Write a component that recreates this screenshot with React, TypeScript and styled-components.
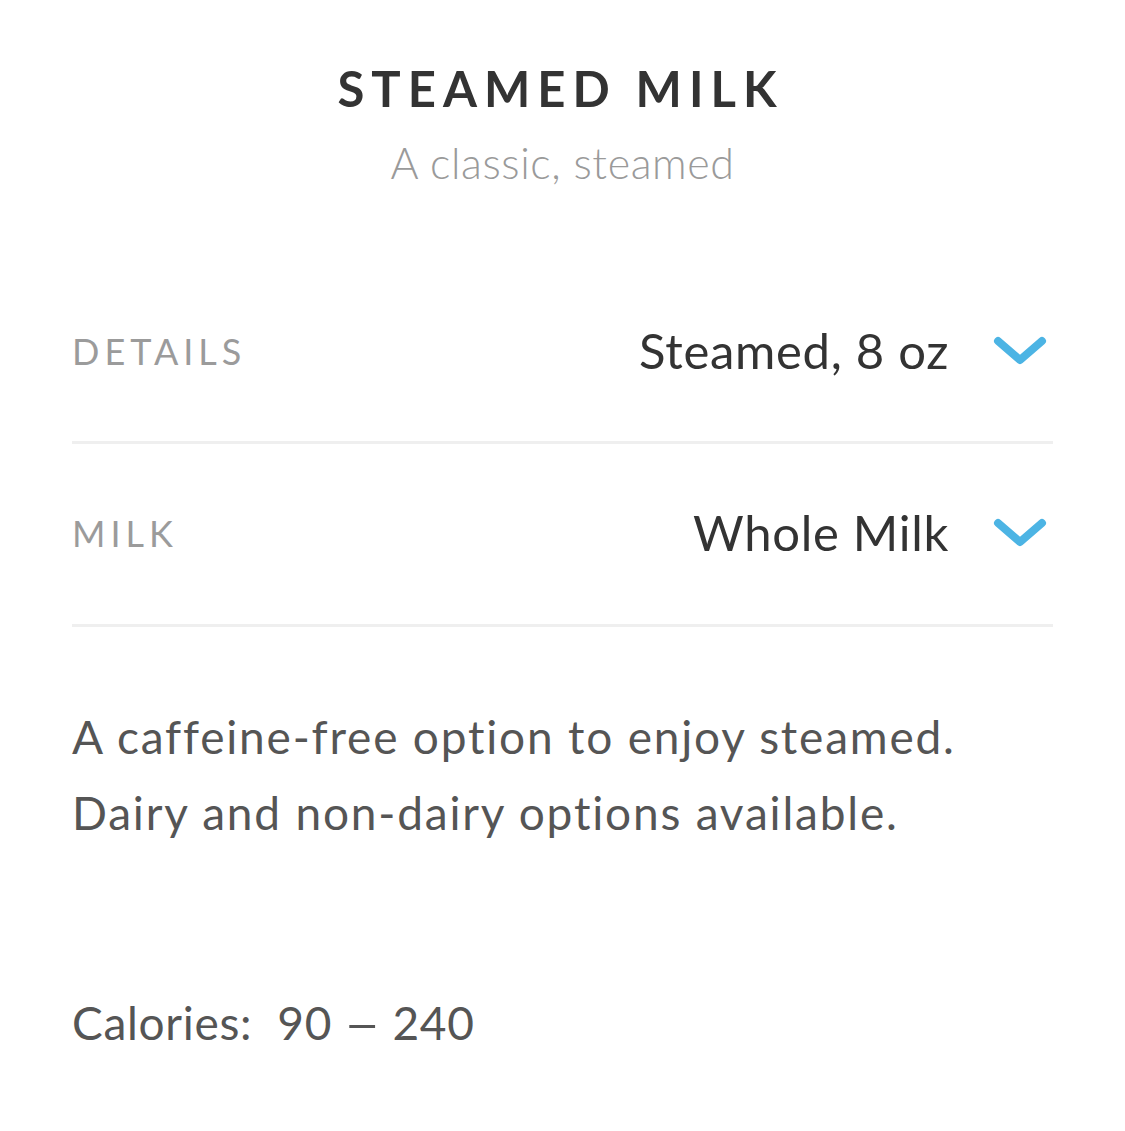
import React from "react";
import styled, { createGlobalStyle } from "styled-components";

const Global = createGlobalStyle`
  html, body { margin: 0; padding: 0; background: #ffffff; }
  body { font-family: Lato, "Noto Sans", sans-serif; -webkit-font-smoothing: antialiased; }
`;

const Page = styled.main`
  width: 1125px;
  min-height: 1131px;
  box-sizing: border-box;
  padding: 0 72px;
  display: flex;
  flex-direction: column;
`;

const Header = styled.header`
  display: flex;
  flex-direction: column;
  align-items: center;
  padding-top: 58px;
`;

const Title = styled.h1`
  margin: 0 0 0 -4px;
  font-size: 49px;
  line-height: 60px;
  font-weight: 700;
  letter-spacing: 7px;
  color: #333333;
`;

const Subtitle = styled.p`
  margin: 19px 0 0;
  font-size: 43px;
  line-height: 52px;
  font-weight: 300;
  letter-spacing: 0.6px;
  color: #9a9a9a;
`;

const Options = styled.section`
  margin-top: 80px;
  display: flex;
  flex-direction: column;
`;

const Row = styled.div<{ $first?: boolean }>`
  display: flex;
  align-items: center;
  justify-content: space-between;
  height: ${(p) => (p.$first ? 175 : 183)}px;
  border-bottom: 3px solid #efefef;
  padding-bottom: ${(p) => (p.$first ? 8 : 2)}px;
  box-sizing: border-box;
`;

const Label = styled.span`
  font-size: 36px;
  letter-spacing: 5px;
  color: #9b9b9b;
  font-weight: 400;
`;

const Selector = styled.button`
  display: flex;
  align-items: center;
  gap: 44px;
  background: none;
  border: 0;
  padding: 0;
  font-family: inherit;
  cursor: pointer;
`;

const Value = styled.span`
  font-size: 49px;
  color: #333333;
  font-weight: 400;
  letter-spacing: 0.7px;
  margin-top: -3px;
`;

const Chevron = styled.svg`
  width: 54px;
  height: 32px;
  margin-right: 6px;
`;

const Description = styled.p`
  margin: 72px 0 0;
  font-size: 46px;
  line-height: 76px;
  color: #555555;
  font-weight: 400;
  letter-spacing: 1.8px;
`;

const Calories = styled.p`
  margin: 142px 0 0;
  font-size: 46px;
  line-height: 60px;
  color: #555555;
  font-weight: 400;
  letter-spacing: 0.7px;
  white-space: pre;
`;

const Dash = styled.span`
  display: inline-block;
  margin: 0 4px;
  transform: scaleX(1.4);
`;

const Caret = () => (
  <Chevron viewBox="0 0 54 32" fill="none">
    <path
      d="M5 6 L27 25 L49 6"
      stroke="#4cb4e4"
      strokeWidth="8"
      strokeLinecap="round"
      strokeLinejoin="round"
    />
  </Chevron>
);

export default function App() {
  return (
    <>
      <Global />
      <Page>
        <Header>
          <Title>STEAMED MILK</Title>
          <Subtitle>A classic, steamed</Subtitle>
        </Header>
        <Options>
          <Row $first>
            <Label>DETAILS</Label>
            <Selector>
              <Value>Steamed, 8 oz</Value>
              <Caret />
            </Selector>
          </Row>
          <Row>
            <Label>MILK</Label>
            <Selector>
              <Value>Whole Milk</Value>
              <Caret />
            </Selector>
          </Row>
        </Options>
        <Description>
          A caffeine-free option to enjoy steamed.
          <br />
          Dairy and non-dairy options available.
        </Description>
        <Calories>
          {"Calories:  90 "}
          <Dash>–</Dash>
          {" 240"}
        </Calories>
      </Page>
    </>
  );
}
